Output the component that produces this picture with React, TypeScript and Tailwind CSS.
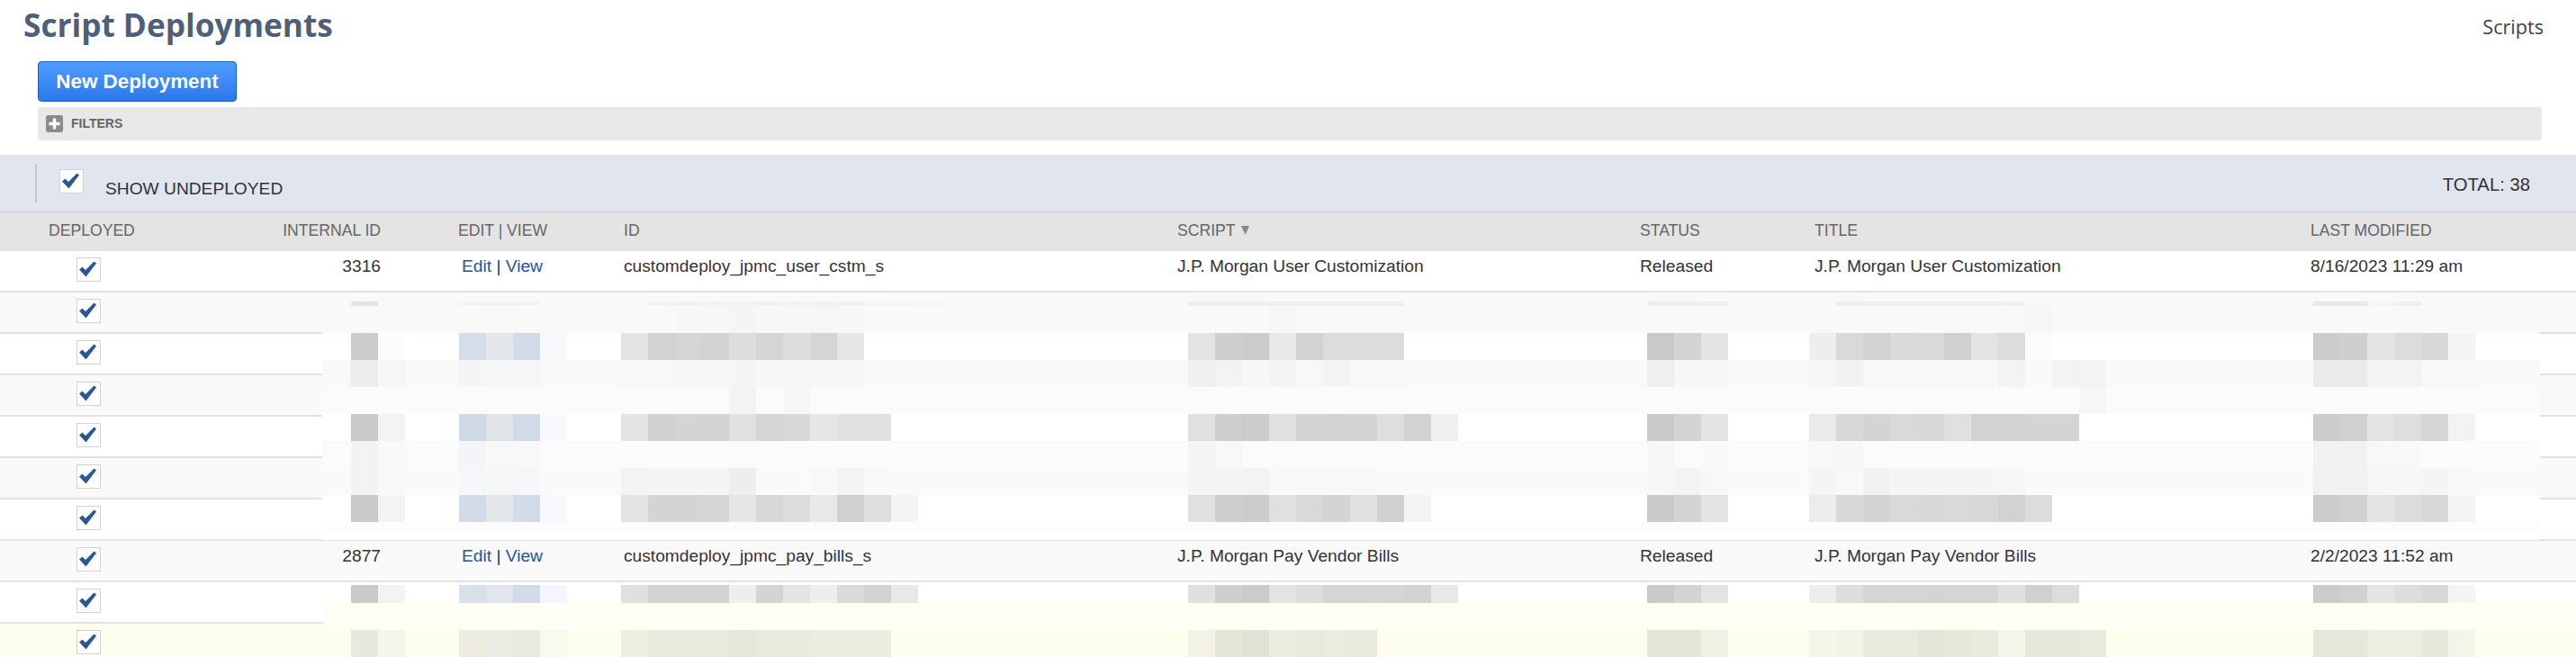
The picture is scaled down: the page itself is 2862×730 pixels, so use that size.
const columns = "grid grid-cols-[200px_223px_270px_615px_514px_194px_551px_1fr]";

type Run = [number, ...string[]];
type Strip = { y: number; h: number; runs: Run[] };

// solid bands the redaction mosaic sits on: y, height, left, right, colour
const bands: [number, number, number, number, string][] = [
  [325, 45, 358, 2822, "#f9f9f9"],
  [370, 30, 358, 2822, "#ffffff"],
  [400, 30, 358, 2822, "#f9f9f9"],
  [430, 30, 358, 2822, "#fbfbfb"],
  [460, 30, 358, 2822, "#ffffff"],
  [490, 30, 358, 2822, "#fbfbfb"],
  [520, 30, 358, 2822, "#fafafa"],
  [550, 30, 358, 2822, "#ffffff"],
  [580, 10, 358, 2822, "#fcfcfc"],
  [590, 10, 358, 2822, "#ffffff"],
  [670, 30, 360, 2862, "#fefef5"],
  [700, 30, 360, 2862, "#fefeee"],
];

// each run: left x, then one colour per 30px cell ("cc" is short for #cccccc)
const strips: Strip[] = [
  { y: 335, h: 5, runs: [[390, "e3"], [510, "f3", "f2", "f3"], [720, "f3", "f2", "f3", "f3", "f2", "f3", "f3", "f2", "f4", "f5", "f6"], [1320, "ee", "ee", "ee", "f0", "f0", "f0", "f0", "f0"], [1830, "ee", "ee", "f0"], [2040, "ee", "f0", "f0", "f0", "f0", "f0", "f1"], [2570, "e8", "e8", "f5", "ef", "fa", "fa"]] },
  { y: 340, h: 30, runs: [[750, "f7", "f7", "f5", "f7", "f7", "f6", "f7"], [1410, "f7"], [2250, "f6"]] },
  { y: 370, h: 30, runs: [[390, "cb", "fc"], [510, "d5dde9", "e3e7ea", "d2dbe7", "f8f9fc"], [690, "e3", "d2", "d5", "d3", "dd", "d5", "dd", "d5", "e6"], [1320, "e3", "cf", "cc", "e8", "d3", "dc", "dc", "dc"], [1830, "c9", "d3", "e3"], [2010, "ee", "d9", "d2", "da", "d9", "d0", "e3", "dc", "fb"], [2570, "cc", "cf", "e4", "dc", "d8", "f4"]] },
  { y: 400, h: 30, runs: [[390, "ec", "f6"], [510, "f3f5f7", "f4f6f8", "f5f6f7"], [690, "f8", "f8", "f7", "f7", "f5", "f7", "f6", "f7", "f7"], [1320, "f0", "f3", "f7", "f3", "f8", "f4", "f8", "f8"], [1830, "ef", "f7", "f7"], [2010, "f6", "f2", "f8", "f8", "f8", "f8", "f8", "f3", "fa", "f3", "f4"], [2570, "ea", "ea", "f3", "f3", "f8", "f8"]] },
  { y: 430, h: 30, runs: [[810, "f3"], [870, "f6"], [2310, "f6"]] },
  { y: 460, h: 30, runs: [[390, "c9", "f3"], [510, "d0d9e6", "e0e4e7", "d0dbe8", "f8f9fc"], [690, "e3", "d1", "d4", "d3", "e0", "d5", "d8", "e6", "e2", "e2"], [1320, "e0", "ce", "cb", "e0", "d3", "d2", "d3", "de", "d2", "ef"], [1830, "c9", "d3", "e3"], [2010, "ea", "d8", "d4", "d9", "d8", "e0", "d2", "d2", "d4", "d4"], [2570, "cc", "d0", "e3", "de", "d5", "f3"]] },
  { y: 490, h: 30, runs: [[390, "f3", "f9"], [510, "f4f5f8", "f7f8f8", "f7f8f8"], [1320, "f5", "f8"], [1830, "f6", "fb", "f9"], [2010, "f8", "f7"], [2570, "f1", "f1", "f8", "f8", "fb", "fb"]] },
  { y: 520, h: 30, runs: [[390, "f3", "f9"], [510, "f5f6f7", "f6f7f7", "f5f6f8"], [690, "f3", "f5", "f5", "f5", "ee", "fa", "fa", "f8", "f4", "f9"], [1320, "f5", "f4", "f3", "f9", "f8", "f8", "f8"], [1830, "f7", "f4", "f8"], [2010, "f5", "f8", "f2", "f5", "f5", "f5", "f5", "f6"], [2570, "f1", "f1", "f7", "f7", "f5", "f9"]] },
  { y: 550, h: 30, runs: [[390, "c9", "f4"], [510, "d2dbe8", "e3e7ea", "d2dce8", "f8f9fc"], [690, "e3", "d4", "d4", "d6", "e6", "d8", "dc", "e8", "d0", "df", "f4"], [1320, "e0", "cf", "cc", "e0", "d9", "d4", "e0", "d0", "f4"], [1830, "c9", "d3", "e3"], [2010, "ec", "d8", "d3", "d9", "d8", "d9", "d8", "d2", "dc"], [2570, "cb", "d0", "e4", "dc", "d8", "f4"]] },
  { y: 650, h: 20, runs: [[390, "c9", "f3"], [510, "d7dfea", "e2e6ea", "d2dbe7", "f4f6fb"], [690, "e0", "d2", "d2", "d2", "ee", "d4", "e4", "ee", "da", "d2", "e8"], [1320, "e0", "cf", "cb", "e3", "dd", "d6", "d6", "d5", "d2", "e8"], [1830, "c9", "d3", "e3"], [2010, "ed", "dd", "d5", "d6", "d4", "d5", "d5", "e0", "d0", "dc"], [2570, "cb", "d0", "e4", "dd", "d8", "f4"]] },
  { y: 700, h: 30, runs: [[390, "e8e9dd", "f5f6e9"], [510, "ebecdf", "ebece3", "e8eae2", "f9faee"], [690, "eef0e0", "e8eadb", "e8eadb", "e8eadb", "e5e7d8", "e8eadb", "e8eadb", "ebeddf", "ebeddf", "ebeddf"], [1320, "f2f3e5", "e4e6d6", "e0e2d3", "ebedde", "e8eadb", "eaecdd", "e8eadb"], [1830, "e4e6d6", "e4e6d6", "f0f1e3"], [2010, "f5f6e8", "f3f4e6", "e9ebdc", "e9ebdc", "e4e6d7", "e6e8d8", "e9ebdc", "f5f6e9", "e6e8da", "e6e8da", "e8eadb"], [2570, "e5e7d8", "e5e7d8", "eceee0", "eceee0", "e6e8da", "f4f5e8"]] },
];

function hex(shade: string) {
  return shade.length === 2 ? `#${shade}${shade}${shade}` : `#${shade}`;
}

function Mosaic() {
  return (
    <svg className="absolute left-0 top-0" width={2862} height={451} viewBox="0 279 2862 451" shapeRendering="crispEdges">
      {bands.map(([y, h, left, right, fill]) => (
        <rect key={y} x={left} y={y} width={right - left} height={h} fill={fill} />
      ))}
      {strips.flatMap((strip) =>
        strip.runs.flatMap(([x, ...cells]) =>
          cells.map((shade, i) => (
            <rect key={`${strip.y}-${x}-${i}`} x={x + i * 30} y={strip.y} width={30} height={strip.h} fill={hex(shade)} />
          ))
        )
      )}
    </svg>
  );
}

function Check({ className = "" }: { className?: string }) {
  return (
    <div className={`h-[27px] w-[27px] border border-[#d2d2d2] bg-white ${className}`}>
      <svg width="25" height="25" viewBox="0 0 25 25">
        <path d="M2 12.5 L5.5 9.5 L9 13 L18.5 3.5 L21 5.5 L9.5 20.5 Z" fill="#2c5797" />
      </svg>
    </div>
  );
}

type Row = { internalId: string; id: string; script: string; title: string; modified: string };

const rows: (Row | null)[] = [
  { internalId: "3316", id: "customdeploy_jpmc_user_cstm_s", script: "J.P. Morgan User Customization", title: "J.P. Morgan User Customization", modified: "8/16/2023 11:29 am" },
  null,
  null,
  null,
  null,
  null,
  null,
  { internalId: "2877", id: "customdeploy_jpmc_pay_bills_s", script: "J.P. Morgan Pay Vendor Bills", title: "J.P. Morgan Pay Vendor Bills", modified: "2/2/2023 11:52 am" },
  null,
  null,
];

function rowBg(i: number) {
  if (i === 9) return "bg-[#fefeee]";
  return i % 2 === 0 ? "bg-white" : "bg-[#f9f9f9]";
}

export default function App() {
  return (
    <div className="h-[730px] w-[2862px] overflow-hidden bg-white font-['Liberation_Sans',Arial,sans-serif] text-[#333]">
      <div className="flex h-[68px] items-start justify-between pl-[26px] pr-[36px]">
        <h1 className="mt-[3px] font-['Open_Sans',sans-serif] text-[35.2px] leading-[48px] font-bold text-[#4d5f7a]">Script Deployments</h1>
        <a className="mt-[16px] font-['Open_Sans',sans-serif] text-[21.6px] leading-[28px] text-[#444]">Scripts</a>
      </div>

      <div className="pl-[42px] pr-[38px]">
        <button type="button" className="block h-[45px] w-[221px] rounded-[4px] border border-[#1d62bd] bg-gradient-to-b from-[#4f9dff] to-[#2a78ea] text-[22.4px] font-bold text-white">
          New Deployment
        </button>
        <div className="mt-[6px] flex h-[37px] items-center rounded-[4px] bg-[#e8e8e8] pl-[9px]">
          <svg width="19" height="19" viewBox="0 0 19 19">
            <rect width="19" height="19" rx="2.5" fill="#8a8a8a" />
            <path d="M9.5 3.5v12M3.5 9.5h12" stroke="#fff" strokeWidth="3.4" />
          </svg>
          <span className="ml-[9px] text-[14px] font-bold text-[#666]">FILTERS</span>
        </div>
      </div>

      <div className="mt-[16px] flex h-[64px] border-b border-[#c8ccd4] bg-[#e0e5ee] pl-[39px] pr-[51px]">
        <div className="mt-[11px] h-[42px] w-[2px] bg-[#c3c7ce]" />
        <Check className="ml-[25px] mt-[16px] h-[26px]" />
        <span className="ml-[24px] mt-[26px] text-[19.2px] leading-[24px]">SHOW UNDEPLOYED</span>
        <span className="ml-auto mt-[21px] text-[20.3px] leading-[24px]">TOTAL: 38</span>
      </div>

      <div className={`${columns} h-[43px] border-b-2 border-[#e2e2e2] bg-[#e4e4e4] pt-[9px] text-[17.6px] leading-[22px] text-[#666]`}>
        <div className="pl-[54px]">DEPLOYED</div>
        <div className="text-right">INTERNAL ID</div>
        <div className="pl-[86px]">EDIT | VIEW</div>
        <div>ID</div>
        <div className="flex h-[22px] items-center gap-[6px]">
          SCRIPT
          <svg width="9" height="10" viewBox="0 0 9 10">
            <path d="M0 0h9L4.5 10Z" fill="#888" />
          </svg>
        </div>
        <div>STATUS</div>
        <div>TITLE</div>
        <div>LAST MODIFIED</div>
      </div>

      <div className="relative">
        {rows.map((row, i) => (
          <div key={i} className={`${columns} h-[46px] border-b-2 border-[#e2e2e2] text-[19.2px] leading-[24px] ${rowBg(i)}`}>
            <div className="pl-[85px] pt-[7px]">
              <Check />
            </div>
            {row && (
              <>
                <div className="pt-[5px] text-right">{row.internalId}</div>
                <div className="pl-[90px] pt-[5px]">
                  <a className="text-[#255599]">Edit</a> | <a className="text-[#255599]">View</a>
                </div>
                <div className="pt-[5px]">{row.id}</div>
                <div className="pt-[5px]">{row.script}</div>
                <div className="pt-[5px]">Released</div>
                <div className="pt-[5px]">{row.title}</div>
                <div className="pt-[5px]">{row.modified}</div>
              </>
            )}
          </div>
        ))}
        <Mosaic />
      </div>
    </div>
  );
}
